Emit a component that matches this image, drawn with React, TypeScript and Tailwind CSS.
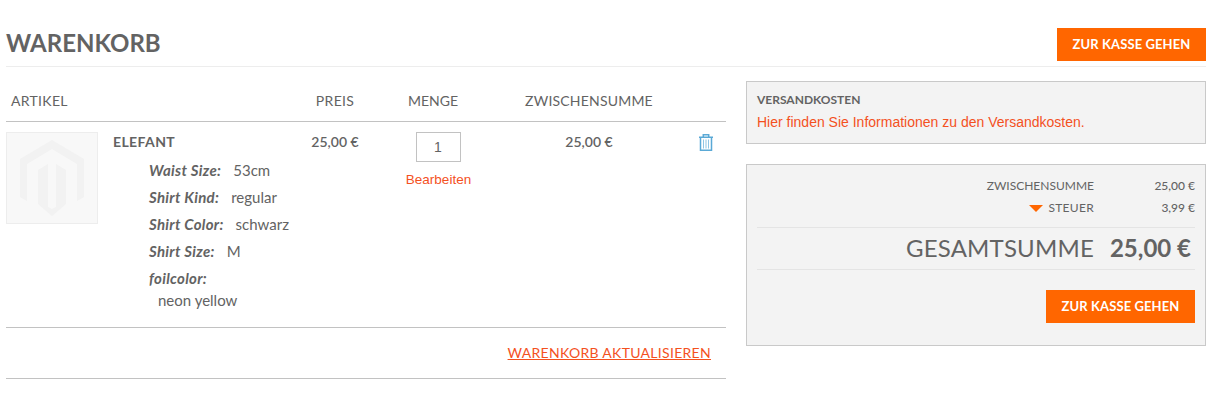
const cols = 'grid grid-cols-[296px_66px_130px_178px_50px]';

const options = [
  { label: 'Waist Size:', value: '53cm' },
  { label: 'Shirt Kind:', value: 'regular' },
  { label: 'Shirt Color:', value: 'schwarz' },
  { label: 'Shirt Size:', value: 'M' },
];

const CheckoutButton = () => (
  <button className="h-[33px] w-[149px] bg-[#ff6600] text-[13px] font-bold tracking-[0.1px] text-white">ZUR KASSE GEHEN</button>
);

const PlaceholderLogo = () => (
  <svg width="64" height="76" viewBox="0 0 64 76" fill="none">
    <path d="M32 0 64 19V57L57 61V24L32 9 7 24V61L0 57V19Z" fill="#f2f2f2" />
    <path d="M18 30 28 24V67L32 69 36 67V24L46 30V64L32 76 18 64Z" fill="#f2f2f2" />
  </svg>
);

const TrashIcon = () => (
  <svg width="14" height="17" viewBox="0 0 14 17" fill="none" stroke="#5aa9d6" strokeWidth="1.5">
    <path d="M0 3.2H14M4.3 3V.8H9.7V3" />
    <path d="M1.5 3.5V16.2H12.5V3.5" />
    <path d="M4.5 5.5V14.5M7 5.5V14.5M9.5 5.5V14.5" strokeWidth="1" stroke="#8fc5e4" />
  </svg>
);

export default function App() {
  return (
    <div className="h-[401px] w-[1228px] overflow-hidden bg-white pl-[6px] pr-[22px] font-['Lato',sans-serif] text-[#636363]">
      <div className="flex h-[67px] items-end justify-between border-b border-[#ededed] pb-[5px]">
        <h1 className="pb-[4px] text-2xl leading-7 font-bold">WARENKORB</h1>
        <CheckoutButton />
      </div>

      <div className="flex gap-5">
        <div className="w-[720px]">
          <div className={`${cols} h-[55px] items-center border-b border-[#c2c2c2] pt-[14px] text-sm`}>
            <div className="pl-[5px] tracking-[0.3px]">ARTIKEL</div>
            <div className="text-center tracking-[0.3px]">PREIS</div>
            <div className="text-center">MENGE</div>
            <div className="pl-[4px] text-center tracking-[0.2px]">ZWISCHENSUMME</div>
            <div />
          </div>

          <div className={`${cols} h-[206px] border-b border-[#c2c2c2] pt-[10px] text-sm`}>
            <div className="flex">
              <div className="flex h-[92px] w-[92px] shrink-0 items-center justify-center border border-[#ededed] bg-[#f8f8f8]">
                <PlaceholderLogo />
              </div>
              <div className="pl-[15px]">
                <div className="leading-[20px] font-bold tracking-[0.4px]">ELEFANT</div>
                <div className="pt-[5px] pl-[36px] text-[15px]">
                  {options.map((o) => (
                    <div key={o.label} className="flex h-[27px] items-center gap-3">
                      <span className="font-bold tracking-[0.3px] italic">{o.label}</span>
                      <span>{o.value}</span>
                    </div>
                  ))}
                  <div className="flex h-[27px] items-center font-bold tracking-[0.3px] italic">foilcolor:</div>
                  <div className="pl-[9px] leading-[17px]">neon yellow</div>
                </div>
              </div>
            </div>
            <div className="text-center leading-[20px] font-semibold">25,00 €</div>
            <div className="flex flex-col items-center pl-[10px]">
              <input
                readOnly
                value="1"
                className="h-[30px] w-[45px] border border-[#c2c2c2] text-center font-['Liberation_Sans',sans-serif] text-sm text-[#636363]"
              />
              <a className="pt-[10px] pl-[1px] font-['Liberation_Sans',sans-serif] text-[13.5px] leading-4 text-[#f4511e]">Bearbeiten</a>
            </div>
            <div className="pl-[4px] text-center leading-[20px] font-semibold">25,00 €</div>
            <div className="pt-[2px] pl-[23px]">
              <TrashIcon />
            </div>
          </div>

          <div className="flex h-[51px] items-center justify-end border-b border-[#c2c2c2] pr-[15px]">
            <a className="text-sm tracking-[0.3px] text-[#f4511e] underline">WARENKORB AKTUALISIEREN</a>
          </div>
        </div>

        <div className="w-[460px] pt-[14px]">
          <div className="h-[63px] border border-[#c9c9c9] bg-[#f3f3f3] px-[10px] pt-[10px]">
            <div className="text-xs leading-4 font-bold">VERSANDKOSTEN</div>
            <div className="pt-[6px] font-['Liberation_Sans',sans-serif] text-sm leading-4 text-[#f4511e]">
              Hier finden Sie Informationen zu den Versandkosten.
            </div>
          </div>

          <div className="mt-5 h-[182px] border border-[#c9c9c9] bg-[#f3f3f3] px-[10px] pt-[10px]">
            <div className="flex h-[22px] items-center justify-end text-xs">
              <span>ZWISCHENSUMME</span>
              <span className="w-[101px] text-right font-medium">25,00 €</span>
            </div>
            <div className="flex h-[22px] items-center justify-end text-xs">
              <span className="mr-[5px] h-0 w-0 border-x-[7px] border-t-[7px] border-x-transparent border-t-[#ff6600]" />
              <span className="tracking-[0.3px]">STEUER</span>
              <span className="w-[101px] text-right font-medium">3,99 €</span>
            </div>
            <div className="mt-[8px] flex h-[43px] items-center justify-end border-y border-[#e4e4e4] pb-[2px]">
              <span className="text-2xl tracking-[0.2px]">GESAMTSUMME</span>
              <span className="w-[101px] pr-[4px] text-right text-2xl font-bold">25,00 €</span>
            </div>
            <div className="flex justify-end pt-[20px]">
              <CheckoutButton />
            </div>
          </div>
        </div>
      </div>
    </div>
  );
}
